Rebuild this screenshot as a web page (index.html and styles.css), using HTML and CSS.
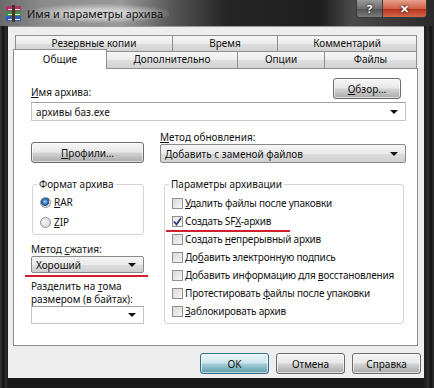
FILE: index.html
```html
<!DOCTYPE html>
<html lang="ru">
<head>
    <meta charset="UTF-8">
    <meta name="viewport" content="width=device-width, initial-scale=1.0">
    <title>Имя и параметры архива</title>
    <link rel="stylesheet" href="styles.css">
</head>
<body>
    <div class="window">
        <div class="titlebar">
            <svg class="app-icon" width="17" height="17" viewBox="0 0 17 17">
                <rect x="1" y="1" width="15" height="5" rx="1" fill="#b0306a"/>
                <rect x="1" y="6" width="15" height="5" rx="1" fill="#3d8f45"/>
                <rect x="1" y="11" width="15" height="5" rx="1" fill="#2f5fb8"/>
                <rect x="3" y="4" width="12" height="1" fill="#f0e8f0"/>
                <rect x="3" y="9" width="12" height="1" fill="#e8f0e8"/>
                <rect x="3" y="14" width="12" height="1" fill="#e8ecf6"/>
                <rect x="7" y="0" width="3" height="17" fill="#4a3420"/>
            </svg>
            <span class="title">Имя и параметры архива</span>
            <div class="caption">
                <span class="cap-btn help">?</span>
                <span class="cap-btn close">✕</span>
            </div>
        </div>
        <div class="client">
            <div class="tabs">
                <div class="tab-row back">
                    <div class="tab">Резервные копии</div>
                    <div class="tab">Время</div>
                    <div class="tab">Комментарий</div>
                </div>
                <div class="tab-row front">
                    <div class="tab active">Общие</div>
                    <div class="tab">Дополнительно</div>
                    <div class="tab">Опции</div>
                    <div class="tab">Файлы</div>
                </div>
            </div>
            <div class="panel">
                <div class="name-row">
                    <label class="lbl"><u>И</u>мя архива:</label>
                    <button class="btn browse"><u>О</u>бзор...</button>
                </div>
                <div class="combo name-combo"><span>архивы баз.exe</span><i class="arrow"></i></div>
                <div class="cols">
                    <div class="col-left">
                        <button class="btn profiles"><u>П</u>рофили...</button>
                        <fieldset class="group format">
                            <legend>Формат архива</legend>
                            <div class="radio checked"><span class="dot"></span><span><u>R</u>AR</span></div>
                            <div class="radio"><span class="dot"></span><span><u>Z</u>IP</span></div>
                        </fieldset>
                        <label class="lbl method">Метод <u>с</u>жатия:</label>
                        <div class="select marked"><span>Хороший</span><i class="arrow"></i></div>
                        <label class="lbl split">Разделить на <u>т</u>ома<br>размером (в байтах):</label>
                        <div class="combo split-combo"><i class="arrow"></i></div>
                    </div>
                    <div class="col-right">
                        <label class="lbl"><u>М</u>етод обновления:</label>
                        <div class="select"><span>Добавить с заменой файлов</span><i class="arrow"></i></div>
                        <fieldset class="group options">
                            <legend>Параметры архивации</legend>
                            <div class="check"><span class="box"></span><span><u>У</u>далить файлы после упаковки</span></div>
                            <div class="check marked"><span class="box on">
                                <svg width="9" height="9" viewBox="0 0 9 9"><path d="M1 4.5 L3.5 7.5 L8 1" fill="none" stroke="#2b3f7a" stroke-width="1.8"/></svg>
                            </span><span>Создать SF<u>X</u>-архив</span></div>
                            <div class="check"><span class="box"></span><span>Создать <u>н</u>епрерывный архив</span></div>
                            <div class="check"><span class="box"></span><span>До<u>б</u>авить электронную подпись</span></div>
                            <div class="check"><span class="box"></span><span>Добавить информацию для <u>в</u>осстановления</span></div>
                            <div class="check"><span class="box"></span><span>Протестировать <u>ф</u>айлы после упаковки</span></div>
                            <div class="check"><span class="box"></span><span><u>З</u>аблокировать архив</span></div>
                        </fieldset>
                    </div>
                </div>
            </div>
            <div class="footer">
                <button class="btn default">OK</button>
                <button class="btn">Отмена</button>
                <button class="btn">Справка</button>
            </div>
        </div>
    </div>
</body>
</html>
```

FILE: styles.css
```css
body {
    margin: 0;
    background: #1c1c1c;
    font-family: "Noto Sans", "Liberation Sans", sans-serif;
    font-size: 10px;
    color: #111;
}
.window {
    width: 434px;
    height: 388px;
    box-sizing: border-box;
    background: linear-gradient(90deg, #3a3a3a 0, #121212 3px, #2c2c2c 6px, #1a1a1a 8px, #1a1a1a 424px, #2e2e2e 428px, #111 431px, #333 434px);
    display: flex;
    flex-direction: column;
}
.titlebar {
    height: 27px;
    display: flex;
    align-items: center;
    padding-left: 5px;
    background: linear-gradient(90deg, #6a6a6a 0%, #8c8c8c 10%, #999 28%, #555 40%, #262626 52%, #1e1e1e 74%, #4a4a4a 81%, #2a2a2a 100%);
}
.app-icon {
    margin-right: 5px;
}
.title {
    font-size: 11px;
    color: #111;
    padding: 2px 6px 2px 0;
    background: radial-gradient(ellipse at center, rgba(220, 220, 220, 0.8) 30%, rgba(200, 200, 200, 0) 75%);
}
.caption {
    margin-left: auto;
    margin-right: 7px;
    align-self: flex-start;
    display: flex;
}
.cap-btn {
    height: 17px;
    display: flex;
    align-items: center;
    justify-content: center;
    color: #fff;
    font-weight: bold;
    border: 1px solid #3a3a3a;
    border-top: none;
    text-shadow: 0 0 3px #000;
}
.help {
    width: 25px;
    font-size: 11px;
    border-radius: 0 0 0 4px;
    background: linear-gradient(#9a9a9a, #6e6e6e 50%, #555 55%, #7a7a7a);
}
.close {
    width: 43px;
    font-size: 11px;
    border-left: none;
    border-radius: 0 0 4px 0;
    background: linear-gradient(#e8a08a, #d0624a 50%, #b8321e 55%, #d06a4c);
}
.client {
    flex: 1;
    margin: 0 10px 10px 8px;
    padding: 8px 3px 4px 5px;
    background: #eeeeee;
    border-top: 1px solid #9a9a9a;
    box-sizing: border-box;
    display: flex;
    flex-direction: column;
}
.tab-row {
    display: grid;
}
.tab-row.back {
    margin-left: 2px;
    grid-template-columns: 158px 105px 139px;
    height: 16px;
}
.tab-row.front {
    grid-template-columns: 94px 131px 87px 92px;
    height: 17px;
}
.tab {
    border: 1px solid #8c8e94;
    border-left: none;
    border-bottom: none;
    background: linear-gradient(#f6f6f6, #ebebeb 50%, #dedede 51%, #d2d2d2);
    text-align: center;
    line-height: 15px;
}
.tab:first-child {
    border-left: 1px solid #8c8e94;
}
.tab.active {
    position: relative;
    z-index: 1;
    background: #fff;
    margin-top: -2px;
    margin-bottom: -1px;
    line-height: 18px;
}
.panel {
    height: 278px;
    margin-right: 3px;
    box-sizing: border-box;
    background: #fff;
    border: 1px solid #8c8e94;
    padding: 9px 11px 0 17px;
}
.name-row {
    display: flex;
    justify-content: space-between;
    align-items: flex-end;
}
.lbl {
    display: block;
    line-height: 14px;
}
.btn {
    font-family: inherit;
    font-size: 10px;
    color: #111;
    height: 21px;
    padding: 0;
    border: 1px solid #6a6a6a;
    border-radius: 3px;
    background: linear-gradient(#f6f6f6, #e8e8e8 45%, #d2d2d2 55%, #a8a8a8);
    box-shadow: inset 0 0 0 1px rgba(255, 255, 255, 0.6);
}
.browse {
    width: 68px;
    margin-right: 5px;
}
.combo, .select {
    position: relative;
    box-sizing: border-box;
    padding-left: 4px;
    display: flex;
    align-items: center;
    white-space: nowrap;
}
.combo {
    background: #fff;
    border: 1px solid #c4c6cc;
    border-top-color: #9ea0a6;
}
.select {
    height: 19px;
    border: 1px solid #8a8a8a;
    border-radius: 2px;
    background: linear-gradient(#f4f4f4, #ebebeb 50%, #dedede 51%, #d0d0d0);
}
.arrow {
    position: absolute;
    right: 7px;
    top: 50%;
    margin-top: -2px;
    border-left: 4px solid transparent;
    border-right: 4px solid transparent;
    border-top: 4px solid #111;
}
.name-combo {
    margin-top: 3px;
    height: 19px;
}
.cols {
    margin-top: 10px;
    display: grid;
    grid-template-columns: 113px 1fr;
    column-gap: 16px;
}
.col-left, .col-right {
    display: flex;
    flex-direction: column;
}
.profiles {
    margin-top: 11px;
    width: 113px;
}
.col-right .lbl {
    line-height: 13px;
}
.group {
    margin: 15px 0 0;
    padding: 0 6px 5px 7px;
    border: 1px solid #d5d5d5;
    border-radius: 3px;
}
.group legend {
    padding: 0 2px;
    margin-left: -3px;
    line-height: 12px;
}
.format {
    margin-left: 1px;
}
.radio {
    display: flex;
    align-items: center;
    height: 14px;
    margin-top: 5px;
}
.radio + .radio {
    margin-top: 6px;
}
.dot {
    width: 11px;
    height: 11px;
    box-sizing: border-box;
    border-radius: 50%;
    border: 1px solid #8e8f8f;
    background: radial-gradient(circle at 40% 40%, #f4f4f4, #d4d4d4);
    margin-right: 3px;
}
.radio.checked .dot {
    background: radial-gradient(circle at 45% 40%, #bfe0f8 0, #3b7ac2 30%, #1d4f8c 55%, #dcdcdc 60%, #f0f0f0);
}
.method {
    margin-top: 7px;
}
.select.marked {
    height: 17px;
}
.select.marked::after {
    content: "";
    position: absolute;
    left: -7px;
    right: -5px;
    bottom: -5px;
    height: 2px;
    background: #d21f2f;
}
.split {
    margin-top: 7px;
    line-height: 13px;
}
.split-combo {
    margin-top: 0;
    height: 18px;
}
.options {
    margin-left: 4px;
    margin-right: 2px;
    padding-bottom: 3px;
}
.check {
    position: relative;
    display: flex;
    align-items: center;
    height: 18px;
    white-space: nowrap;
    letter-spacing: -0.2px;
}
.check:first-of-type {
    margin-top: 4px;
}
.box {
    width: 11px;
    height: 11px;
    flex: none;
    box-sizing: border-box;
    border: 1px solid #8e8f8f;
    background: linear-gradient(135deg, #d8d8d8, #f6f6f6);
    margin-right: 2px;
    display: flex;
    align-items: center;
    justify-content: center;
}
.box.on {
    background: linear-gradient(135deg, #e4e4e4, #fbfbfb);
}
.check.marked::after {
    content: "";
    position: absolute;
    left: -6px;
    width: 124px;
    bottom: -2px;
    height: 2px;
    background: #d21f2f;
}
.footer {
    margin-top: 7px;
    display: flex;
    justify-content: flex-end;
    gap: 7px;
}
.footer .btn {
    width: 69px;
}
.btn.default {
    border-color: #2f6e85;
    background: linear-gradient(#eaf6fa, #cfe6ee 45%, #a4cdd8 55%, #5d9aa8);
}
```
